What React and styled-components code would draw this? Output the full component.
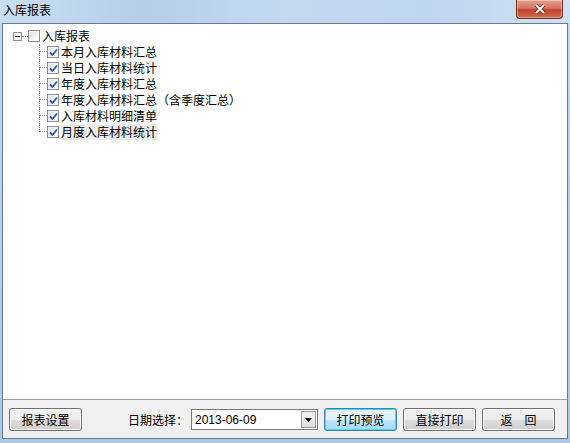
import styled, { createGlobalStyle } from "styled-components";

const GlobalStyle = createGlobalStyle`
	body {
		margin: 0;
		font-family: "Noto Sans CJK SC", "Liberation Sans", sans-serif;
		font-size: 12px;
		color: #000;
	}
`;

const Window = styled.div`
	width: 570px;
	height: 443px;
	display: flex;
	flex-direction: column;
	background: linear-gradient(180deg, #c4daf1 0%, #b8d0ea 40%, #adc8e6 100%);
	overflow: hidden;
`;

const TitleBar = styled.div`
	height: 23px;
	display: flex;
	align-items: flex-start;
	justify-content: space-between;
	padding: 0 7px 0 3px;
	background: linear-gradient(90deg, #c9def2 0%, #b5cfe9 25%, #c2d9f0 50%, #bed5ee 75%, #d0e2f4 100%);
`;

const Title = styled.span`
	margin-top: 2px;
	line-height: 16px;
	font-size: 12px;
`;

const CloseButton = styled.div`
	width: 45px;
	height: 18px;
	display: flex;
	align-items: center;
	justify-content: center;
	border: 1px solid #6d2a25;
	border-top: none;
	border-radius: 0 0 4px 4px;
	background: linear-gradient(180deg, #e6a593 0%, #d2735f 45%, #c2402c 55%, #cf6c4a 100%);
	box-shadow: inset 0 0 0 1px rgba(255, 220, 210, 0.5);
`;

const Body = styled.div`
	flex: 1;
	margin: 0 2px 4px 2px;
	display: flex;
	flex-direction: column;
	border: 1px solid #6a7a8c;
	background: #f0f0f0;
`;

const TreePanel = styled.div`
	flex: 1;
	background: #fff;
	border-bottom: 1px solid #a0a0a0;
	padding: 4px 0 0 0;
`;

const Row = styled.div`
	height: 16px;
	display: flex;
	align-items: center;
	padding-left: ${(p) => p.$indent}px;
`;

const Expander = styled.div`
	width: 9px;
	height: 9px;
	box-sizing: border-box;
	border: 1px solid #919191;
	background: #fff;
	display: flex;
	align-items: center;
	justify-content: center;
	margin-left: 10px;
	&::after {
		content: "";
		width: 5px;
		height: 1px;
		background: #222;
	}
`;

const HLine = styled.div`
	width: ${(p) => p.$w}px;
	height: 0;
	border-top: 1px dotted #888;
`;

const Connector = styled.div`
	width: 8px;
	height: 16px;
	display: flex;
	flex-direction: column;
`;

const ConnTop = styled.div`
	height: 8px;
	border-left: 1px dotted #888;
	border-bottom: 1px dotted #888;
	box-sizing: border-box;
`;

const ConnBottom = styled.div`
	height: 8px;
	border-left: ${(p) => (p.$last ? "none" : "1px dotted #888")};
	box-sizing: border-box;
`;

const Check = styled.div`
	width: 12px;
	height: 12px;
	box-sizing: border-box;
	border: 1px solid #8f8f8f;
	background: linear-gradient(135deg, #dcdcdc 0%, #f4f4f4 60%, #ffffff 100%);
	box-shadow: inset 0 0 0 1px #f4f4f4;
	display: flex;
	align-items: center;
	justify-content: center;
`;

const Label = styled.span`
	margin-left: 2px;
	padding-right: 1px;
	line-height: 16px;
	background: ${(p) => (p.$selected ? "#ececec" : "transparent")};
`;

const Footer = styled.div`
	height: 37px;
	display: flex;
	align-items: center;
	padding: 1px 0 0 6px;
`;

const Button = styled.button`
	width: 73px;
	height: 23px;
	box-sizing: border-box;
	font-family: inherit;
	font-size: 12px;
	color: #000;
	padding: 0;
	border: 1px solid ${(p) => (p.$default ? "#3c7fb1" : "#707070")};
	border-radius: 3px;
	background: ${(p) =>
		p.$default
			? "linear-gradient(180deg, #eaf6fd 0%, #d9f0fc 50%, #bee6fd 51%, #a7d9f5 100%)"
			: "linear-gradient(180deg, #f2f2f2 0%, #ebebeb 50%, #dddddd 51%, #cfcfcf 100%)"};
	box-shadow: inset 0 0 0 1px ${(p) => (p.$default ? "#48d8fb" : "#fcfcfc")};
	margin-left: ${(p) => p.$gap || 0}px;
`;

const DateLabel = styled.span`
	margin-left: 46px;
	width: 63px;
`;

const Combo = styled.div`
	width: 127px;
	height: 21px;
	box-sizing: border-box;
	border: 1px solid #7a7a7a;
	background: #fff;
	display: flex;
	align-items: center;
	justify-content: space-between;
	padding: 0 1px 0 3px;
	font-family: "Liberation Sans", sans-serif;
`;

const DropButton = styled.div`
	width: 15px;
	height: 17px;
	box-sizing: border-box;
	border: 1px solid #9a9a9a;
	background: linear-gradient(180deg, #f4f4f4 0%, #dedede 100%);
	display: flex;
	align-items: center;
	justify-content: center;
`;

const items = [
	"本月入库材料汇总",
	"当日入库材料统计",
	"年度入库材料汇总",
	"年度入库材料汇总（含季度汇总）",
	"入库材料明细清单",
	"月度入库材料统计",
];

function CheckMark() {
	return (
		<svg width="9" height="9" viewBox="0 0 9 9">
			<path d="M1 4.5 L3.5 7 L8 1.5" fill="none" stroke="#2c58b0" strokeWidth="1.8" />
		</svg>
	);
}

export default function App() {
	return (
		<Window>
			<GlobalStyle />
			<TitleBar>
				<Title>入库报表</Title>
				<CloseButton>
					<svg width="12" height="10" viewBox="0 0 12 10">
						<path d="M2 1 L10 9 M10 1 L2 9" stroke="#4a1a14" strokeWidth="3.4" />
						<path d="M2 1 L10 9 M10 1 L2 9" stroke="#fff" strokeWidth="2" />
					</svg>
				</CloseButton>
			</TitleBar>
			<Body>
				<TreePanel>
					<Row $indent={0}>
						<Expander />
						<HLine $w={6} />
						<Check />
						<Label>入库报表</Label>
					</Row>
					{items.map((t, i) => (
						<Row key={t} $indent={36}>
							<Connector>
								<ConnTop />
								<ConnBottom $last={i === items.length - 1} />
							</Connector>
							<Check>
								<CheckMark />
							</Check>
							<Label $selected={i === items.length - 1}>{t}</Label>
						</Row>
					))}
				</TreePanel>
				<Footer>
					<Button>报表设置</Button>
					<DateLabel>日期选择：</DateLabel>
					<Combo>
						<span>2013-06-09</span>
						<DropButton>
							<svg width="7" height="4" viewBox="0 0 7 4">
								<path d="M0 0 H7 L3.5 4 Z" fill="#000" />
							</svg>
						</DropButton>
					</Combo>
					<Button $default $gap={6}>打印预览</Button>
					<Button $gap={6}>直接打印</Button>
					<Button $gap={6}>返　回</Button>
				</Footer>
			</Body>
		</Window>
	);
}
